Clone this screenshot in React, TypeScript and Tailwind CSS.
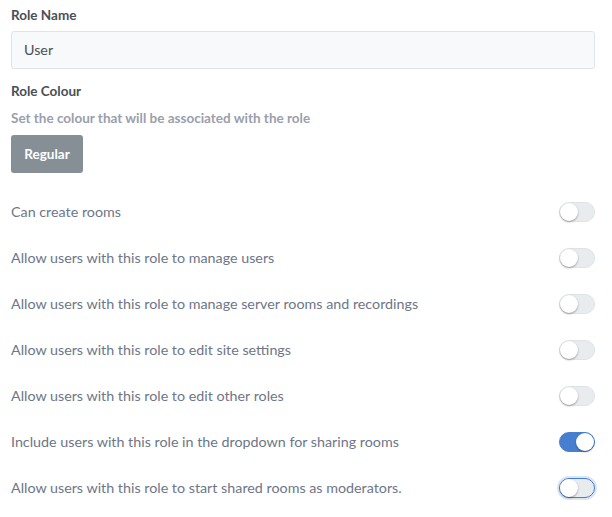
import React, { useState } from 'react';

type Perm = { label: string; on: boolean; focused?: boolean };

const perms: Perm[] = [
  { label: 'Can create rooms', on: false },
  { label: 'Allow users with this role to manage users', on: false },
  { label: 'Allow users with this role to manage server rooms and recordings', on: false },
  { label: 'Allow users with this role to edit site settings', on: false },
  { label: 'Allow users with this role to edit other roles', on: false },
  { label: 'Include users with this role in the dropdown for sharing rooms', on: true },
  { label: 'Allow users with this role to start shared rooms as moderators.', on: false, focused: true },
];

const Toggle: React.FC<{ on: boolean; focused?: boolean; onClick: () => void }> = ({ on, focused, onClick }) => (
  <button
    type="button"
    onClick={onClick}
    className={
      'relative w-[36px] h-[20px] rounded-full border shrink-0 ' +
      (on
        ? 'bg-[#467fcf] border-[#467fcf]'
        : focused
        ? 'bg-[#e9ecef] border-[#467fcf] shadow-[0_0_0_2px_rgba(70,127,207,0.2)]'
        : 'bg-[#e9ecef] border-[#dfe3e9]')
    }
  >
    <span
      className={
        'absolute top-[0px] w-[18px] h-[18px] rounded-full bg-white shadow-[0_1px_2px_rgba(0,0,0,0.35)] ' +
        (on ? 'left-[16px]' : 'left-[0px]')
      }
    />
  </button>
);

export default function App() {
  const [items, setItems] = useState(perms);
  return (
    <div className="bg-white w-[612px] h-[517px] pl-[11px] pr-[17px] pt-[5px] font-['Lato',sans-serif] text-[14.3px]">
      <div className="font-bold text-[#495057] leading-[20px] text-[13.5px]">Role Name</div>
      <div className="mt-[6px] h-[38px] border border-[#e0e5ec] bg-[#f8f9fa] rounded-[3px] flex items-center px-[12px] text-[#495057]">
        User
      </div>
      <div className="mt-[12px] font-bold text-[#495057] leading-[20px] text-[13.5px]">Role Colour</div>
      <div className="mt-[7px] font-bold text-[#9aa0ac] leading-[20px] text-[13.5px]">Set the colour that will be associated with the role</div>
      <button
        type="button"
        className="mt-[7px] w-[72px] h-[38px] rounded-[3px] bg-[#868e96] text-white font-bold text-[13.5px]"
      >
        Regular
      </button>
      <div className="mt-[16px] flex flex-col">
        {items.map((p, i) => (
          <div key={p.label} className="h-[46px] flex items-center justify-between text-[#6e7687]">
            <span>{p.label}</span>
            <Toggle
              on={p.on}
              focused={p.focused}
              onClick={() => setItems(prev => prev.map((q, j) => (j === i ? { ...q, on: !q.on } : q)))}
            />
          </div>
        ))}
      </div>
    </div>
  );
}
